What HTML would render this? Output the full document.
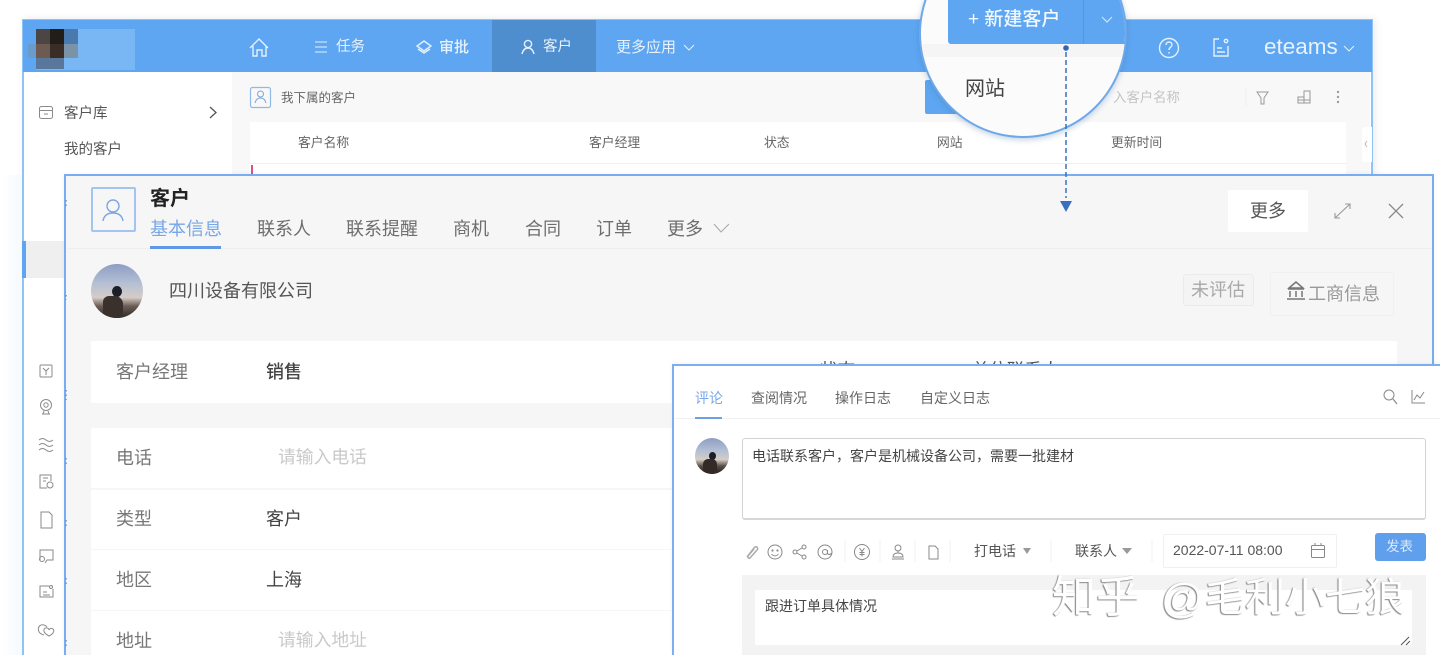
<!DOCTYPE html>
<html lang="zh">
<head>
<meta charset="utf-8">
<title>客户</title>
<style>
html,body{margin:0;padding:0;background:#fff}
body{width:1440px;height:655px;overflow:hidden;position:relative;font-family:"Liberation Sans","Noto Sans CJK SC",sans-serif;color:#555}
#r{position:absolute;left:0;top:0;width:1440px;height:655px;overflow:hidden;filter:blur(.35px);background:#fff}
.b{position:absolute;box-sizing:border-box}
.t{position:absolute;white-space:nowrap;line-height:1;font-family:"Liberation Sans","Noto Sans CJK SC",sans-serif}
svg.l{position:absolute;left:0;top:0;width:1440px;height:655px;overflow:visible;pointer-events:none}
.w{color:#e8f2fd;font-size:14.500px}
.h{color:#666;font-size:12.800px}
.tab{color:#6e6e6e;font-size:18px;top:220px}
.lab{color:#777;font-size:18px;left:116px}
.val{color:#444;font-size:18px;left:266px}
.ph{color:#c9c9c9;font-size:17.800px;left:278px}
.ct{color:#666;font-size:14px;top:391px}
.wm{color:#fff;text-shadow:-1px 1px 1px #8c8c8c,-1px 0 1px #b0b0b0}
</style>
</head>
<body>
<div id="r">
<!-- outer window -->
<div class="b" style="left:22px;top:19px;width:1351px;height:640px;background:#fff;border:2px solid #8fc2f5;border-top-width:1px;box-shadow:2px 0 8px rgba(0,0,0,.08)"></div>
<div class="b" style="left:0;top:175px;width:22px;height:480px;background:linear-gradient(90deg,#fff,#f6fafe)"></div>
<div class="b" style="left:23px;top:20px;width:1349px;height:52px;background:#5ea6f1"></div>
<div class="b" style="left:492px;top:20px;width:104px;height:52px;background:#4e8ecf"></div>
<!-- logo -->
<div class="b" style="left:36px;top:29px;width:99px;height:41px;background:#79b6f4"></div>
<div class="b" style="left:36px;top:29px;width:22px;height:15px;background:#4b4644"></div>
<div class="b" style="left:50px;top:29px;width:14px;height:15px;background:#231d1a"></div>
<div class="b" style="left:64px;top:29px;width:14px;height:15px;background:#4a79ae"></div>
<div class="b" style="left:28px;top:44px;width:8px;height:14px;background:#6a9ccb"></div>
<div class="b" style="left:36px;top:44px;width:14px;height:14px;background:#6d5a50"></div>
<div class="b" style="left:50px;top:44px;width:14px;height:14px;background:#3a2c26"></div>
<div class="b" style="left:64px;top:44px;width:14px;height:14px;background:#7b93a7"></div>
<div class="b" style="left:36px;top:58px;width:28px;height:11px;background:#58779a"></div>

<div class="t w" style="left:336px;top:40px">任务</div>
<div class="t w" style="left:439px;top:40px;font-size:15px;font-weight:500">审批</div>
<div class="t w" style="left:543px;top:40px">客户</div>
<div class="t w" style="left:616px;top:40px;font-size:15px">更多应用</div>
<div class="t" style="left:1264px;top:36px;font-size:22.500px;color:#e8f2fd">eteams</div>
<svg class="l" fill="none" stroke="#e4f0fd" stroke-width="1.400">
<path d="M250 48l9-9 9 9M253 46v10h4v-6h5v6h4V46"/>
<path d="M315 42h12M315 47h12M315 52h12" stroke-width="1"/>
<path d="M424 41l7 5-7 5-7-5zM418 49l6 4 6-4"/>
<circle cx="528" cy="44" r="3.600"/><path d="M522 54c1-4 3-6 6-6s5 2 6 6"/>
<path d="M684 45l5 5 5-5" stroke-width="1"/>
<circle cx="1169" cy="48" r="9.500"/><path d="M1166 45c0-4 6-4 6 0 0 2-3 2-3 5M1169 52v1.500"/>
<path d="M1219 39h-5v17h14v-10M1217 48h5M1217 52h8"/><circle cx="1226" cy="41" r="1.700"/>
<path d="M1344 46l5 5 5-5" stroke-width="1"/>
</svg>

<!-- sidebar -->
<div class="b" style="left:232px;top:72px;width:1138px;height:110px;background:#f8f8f8"></div>
<div class="t" style="left:64px;top:107px;font-size:14.500px;color:#555">客户库</div>
<div class="t" style="left:64px;top:143px;font-size:14.500px;color:#555">我的客户</div>
<div class="b" style="left:26px;top:241px;width:40px;height:37px;background:#efefef"></div>
<div class="b" style="left:22px;top:241px;width:4px;height:37px;background:#5ea6f1"></div>
<svg class="l" fill="none" stroke="#8a8a8a" stroke-width="1">
<rect x="39.500" y="106.500" width="13" height="12" rx="2"/><path d="M39.500 110.500h13M44 114h4"/>
<path d="M210 107l6 5.500-6 5.500" stroke="#555" stroke-width="1.300"/>
<rect x="40" y="365" width="12" height="12" rx="1"/><path d="M43 368l3 3 3-3M46 371v4"/>
<circle cx="46" cy="405" r="5.500"/><circle cx="46" cy="405" r="2.200"/><path d="M42 414h8M44 411l-1 3M48 411l1 3"/>
<path d="M39 440q3.500-3 7 0t7 0M39 445q3.500-3 7 0t7 0M39 450q3.500-3 7 0t7 0"/>
<path d="M51 481v-6h-11v13h7M43 478h5M43 481h3"/><circle cx="50" cy="485" r="3"/>
<path d="M41 512h8l3 3v13h-11z"/>
<path d="M40 561v-11h13v10h-6l-2 3"/><circle cx="42" cy="559" r="2.500"/>
<path d="M49 586h-9v11h13v-8M43 592h4M43 595h7"/><circle cx="51" cy="587" r="1.500"/>
<path d="M44 635c-9-2-6-12 0-10 2 .5 3 2 3 2"/><path d="M49 636c-8-4-5-9-2-8 1 0 2 1 2 2 1-2 3-2 4-1 2 2 0 5-4 7z"/>
</svg>

<!-- list -->
<div class="t h" style="left:281px;top:92px;font-size:12.500px">我下属的客户</div>
<div class="b" style="left:925px;top:80px;width:80px;height:34px;background:#5ea6f1;border-radius:2px"></div>
<div class="t" style="left:1113px;top:91px;font-size:13.400px;color:#c4c4c4">入客户名称</div>
<div class="b" style="left:250px;top:122px;width:1096px;height:60px;background:#fff"></div>
<div class="b" style="left:250px;top:163px;width:1096px;height:1px;background:#f0f0f0"></div>
<div class="t h" style="left:298px;top:137px">客户名称</div>
<div class="t h" style="left:589px;top:137px">客户经理</div>
<div class="t h" style="left:764px;top:137px">状态</div>
<div class="t h" style="left:937px;top:137px">网站</div>
<div class="t h" style="left:1111px;top:137px">更新时间</div>
<div class="b" style="left:251px;top:165px;width:2px;height:12px;background:#d9547c"></div>
<div class="b" style="left:1362px;top:127px;width:10px;height:35px;background:#fff;border-radius:3px 0 0 3px"></div>
<svg class="l" fill="none" stroke="#999" stroke-width="1">
<rect x="250.500" y="87.500" width="20" height="20" rx="2" stroke="#8fb9e8" stroke-width="1.200"/>
<circle cx="260.500" cy="94" r="3" stroke="#7aa5d8"/><path d="M255 103c1-4 3-5 5.500-5s4.500 1 5.500 5" stroke="#7aa5d8"/>
<path d="M1246 88v18" stroke="#eee"/>
<path d="M1257 92h11l-4 6v6h-3v-6z"/>
<path d="M1298 97h6v-6h6v12h-12zM1304 97v6M1304 91v6M1298 100h12"/>
<circle cx="1338" cy="92" r=".7"/><circle cx="1338" cy="97" r=".7"/><circle cx="1338" cy="102" r=".7"/>
<path d="M1367 141l-2 3 2 3" stroke="#bbb"/>
</svg>

<!-- magnifier -->
<div class="b" style="left:919px;top:-71px;width:208px;height:209px;border-radius:50%;background:#fbfbfb;border:2px solid #6ea8e8;overflow:hidden;box-shadow:0 2px 6px rgba(60,110,170,.3)">
  <div class="b" style="left:27px;top:0;width:180px;height:113px;background:#5ea6f1;border-radius:0 0 0 3px"></div>
  <div class="b" style="left:162px;top:0;width:1px;height:113px;background:#5595da"></div>
  <div class="b" style="left:0;top:113px;width:208px;height:13px;background:#f5f5f5"></div>
  <div class="t" style="left:47px;top:79px;font-size:19px;font-weight:500;color:#f2f8fe">+ 新建客户</div>
  <div class="t" style="left:44px;top:148px;font-size:20px;color:#444">网站</div>
  <svg style="position:absolute;left:178px;top:82px" width="16" height="14" fill="none" stroke="#cfe3fa" stroke-width="1.200"><path d="M3 4l5 5 5-5"/></svg>
</div>

<!-- modal -->
<div class="b" style="left:64px;top:174px;width:1370px;height:490px;background:#f6f6f6;border:2px solid #78aef0;box-shadow:0 0 4px rgba(0,0,0,.06)"></div>
<div class="b" style="left:67px;top:248px;width:1365px;height:1px;background:#eeeeee"></div>
<div class="b" style="left:91px;top:187px;width:45px;height:45px;border:2px solid #a3c4f0;border-radius:2px"></div>
<div class="t" style="left:150px;top:189px;font-size:20px;font-weight:700;color:#222">客户</div>
<div class="t tab" style="left:150px;color:#78a6e6">基本信息</div>
<div class="b" style="left:150px;top:246px;width:71px;height:3px;background:#5f98e4"></div>
<div class="t tab" style="left:257px">联系人</div>
<div class="t tab" style="left:346px">联系提醒</div>
<div class="t tab" style="left:453px">商机</div>
<div class="t tab" style="left:525px">合同</div>
<div class="t tab" style="left:596px">订单</div>
<div class="t tab" style="left:667px">更多</div>
<div class="b" style="left:1228px;top:190px;width:80px;height:42px;background:#fff;border-radius:2px"></div>
<div class="t" style="left:1250px;top:202px;font-size:18px;color:#555">更多</div>
<!-- avatar -->
<div class="b" style="left:91px;top:264px;width:52px;height:54px;border-radius:50%;overflow:hidden;background:linear-gradient(180deg,#8e9dc4 0%,#b3bfd4 35%,#d5cdc6 62%,#6b5d56 78%,#2e2724 100%)">
  <div class="b" style="left:21px;top:22px;width:10px;height:11px;border-radius:50%;background:#1c1f28"></div>
  <div class="b" style="left:12px;top:32px;width:20px;height:22px;border-radius:6px 8px 0 0;background:#3a302c"></div>
</div>
<div class="t" style="left:169px;top:282px;font-size:18px;color:#555">四川设备有限公司</div>
<div class="b" style="left:1183px;top:274px;width:71px;height:32px;background:#f4f4f4;border:1px solid #ebebeb;border-radius:3px"></div>
<div class="t" style="left:1191px;top:281px;font-size:18px;color:#a8a8a8">未评估</div>
<div class="b" style="left:1270px;top:272px;width:124px;height:44px;border:1px solid #f0f0f0;border-radius:3px"></div>
<div class="t" style="left:1308px;top:285px;font-size:18px;color:#999">工商信息</div>
<!-- cards -->
<div class="b" style="left:91px;top:341px;width:1306px;height:62px;background:#fff;border-radius:2px"></div>
<div class="t lab" style="top:363px">客户经理</div>
<div class="t val" style="top:363px;font-weight:500">销售</div>
<div class="t" style="left:820px;top:362px;font-size:17.500px;color:#555">状态</div>
<div class="t" style="left:972px;top:362px;font-size:17.500px;color:#555">单位联系人</div>
<div class="b" style="left:91px;top:428px;width:1306px;height:60px;background:#fff;border-radius:2px"></div>
<div class="b" style="left:91px;top:490px;width:1306px;height:170px;background:#fff"></div>
<div class="b" style="left:91px;top:549px;width:1306px;height:1px;background:#f6f6f6"></div>
<div class="b" style="left:91px;top:610px;width:1306px;height:1px;background:#f6f6f6"></div>
<div class="t lab" style="top:449px">电话</div>
<div class="t ph" style="top:449px">请输入电话</div>
<div class="t lab" style="top:510px">类型</div>
<div class="t val" style="top:510px">客户</div>
<div class="t lab" style="top:571px">地区</div>
<div class="t val" style="top:571px">上海</div>
<div class="t lab" style="top:632px">地址</div>
<div class="t ph" style="top:632px">请输入地址</div>
<svg class="l" fill="none" stroke="#888" stroke-width="1.300">
<circle cx="113" cy="206" r="6" stroke="#7da6e0" stroke-width="1.400"/><path d="M103 221c1-6 5-8 10-8s9 2 10 8" stroke="#7da6e0" stroke-width="1.400"/>
<path d="M714 224l7 8 8-8" stroke="#aaa" stroke-width="1.100"/>
<path d="M1335 218l15-14M1335 213v5h5M1345 204h5v5" stroke="#999" stroke-width="1.100"/>
<path d="M1389 204l14 14M1403 204l-14 14" stroke="#888" stroke-width="1.300"/>
<path d="M1296 282l-7 6h14zM1288 289h16M1290 291v6M1296 291v6M1302 291v6M1287 299h18" stroke="#777" stroke-width="1.500"/>
<g stroke="#6a8fc0" stroke-width="1.500" stroke-dasharray="1.500 3">
<path d="M66 200v6M66 295v5M66 390v10M66 458v6M66 520v8M66 578v6M66 640v6"/>
</g>
</svg>

<!-- comment panel -->
<div class="b" style="left:672px;top:364px;width:780px;height:300px;background:#fff;border:2px solid #7eaeee;box-shadow:0 -1px 4px rgba(0,0,0,.05)"></div>
<div class="b" style="left:675px;top:418px;width:765px;height:1px;background:#f0f0f0"></div>
<div class="t ct" style="left:695px;color:#7aa7e6">评论</div>
<div class="b" style="left:695px;top:417px;width:27px;height:2px;background:#6b9fe6"></div>
<div class="t ct" style="left:751px">查阅情况</div>
<div class="t ct" style="left:835px">操作日志</div>
<div class="t ct" style="left:920px">自定义日志</div>
<div class="b" style="left:695px;top:438px;width:34px;height:36px;border-radius:50%;overflow:hidden;background:linear-gradient(180deg,#8e9dc4 0%,#b3bfd4 35%,#d5cdc6 60%,#5a4d47 78%,#221d1b 100%)">
  <div class="b" style="left:14px;top:14px;width:7px;height:8px;border-radius:50%;background:#1c1f28"></div>
  <div class="b" style="left:8px;top:21px;width:14px;height:15px;border-radius:5px 5px 0 0;background:#332a27"></div>
</div>
<div class="b" style="left:742px;top:438px;width:684px;height:82px;border:1px solid #d2d2d2;border-bottom:2px solid #d6d6d6;border-radius:3px"></div>
<div class="t" style="left:752px;top:449px;font-size:14px;color:#444">电话联系客户，客户是机械设备公司，需要一批建材</div>
<div class="t" style="left:974px;top:544px;font-size:14px;color:#555">打电话</div>
<div class="t" style="left:1075px;top:544px;font-size:14px;color:#555">联系人</div>
<div class="b" style="left:1163px;top:534px;width:174px;height:34px;border:1px solid #f0f0f0;border-radius:2px"></div>
<div class="t" style="left:1173px;top:543px;font-size:14px;color:#555">2022-07-11 08:00</div>
<div class="b" style="left:1375px;top:533px;width:51px;height:28px;background:#5f9fec;border-radius:3px"></div>
<div class="t" style="left:1386px;top:540px;font-size:13.500px;color:#dbe9fb">发表</div>
<div class="b" style="left:742px;top:575px;width:684px;height:85px;background:#f3f3f3"></div>
<div class="b" style="left:755px;top:590px;width:657px;height:55px;background:#fff;border-radius:2px"></div>
<div class="t" style="left:765px;top:599px;font-size:14px;color:#444">跟进订单具体情况</div>
<svg class="l" fill="none" stroke="#888" stroke-width="1">
<circle cx="1389" cy="395" r="5"/><path d="M1393 399l4 5" stroke-width="1.200"/>
<path d="M1412 390v13h13M1414 400l3-5 3 3 4-6"/>
<path d="M747 557l7-9c2-3 5 0 3 2l-7 8c-1 1-3-1-2-2l6-7" stroke="#aaa" stroke-width="1.500"/>
<circle cx="775" cy="552" r="7"/><circle cx="772.500" cy="550.500" r=".6"/><circle cx="777.500" cy="550.500" r=".6"/><path d="M771.500 554c2 2.500 5 2.500 7 0"/>
<circle cx="795" cy="552" r="2"/><circle cx="804" cy="547" r="2"/><circle cx="804" cy="557" r="2"/><path d="M797 551l5-3M797 553l5 3"/>
<circle cx="825" cy="552" r="7"/><circle cx="825" cy="552" r="2.500"/><path d="M827.500 550v3c0 2 3 2 4 0"/>
<path d="M845 540v22M880 540v22M915 540v22M950 540v22M1051 540v22M1152 540v22" stroke="#f0f0f0"/>
<circle cx="862" cy="552" r="7.500"/><path d="M859.500 548l2.500 3.500 2.500-3.500M862 551.500v5M859.500 552.500h5M859.500 554.500h5"/>
<circle cx="898" cy="548" r="3"/><path d="M898 551v2M893 557c0-3 2-4 5-4s5 1 5 4zM892 559h12"/>
<path d="M929 546h6l3 3v10h-9z"/>
<path d="M1023 548h8l-4 6z" fill="#999" stroke="none"/>
<path d="M1122 548h10l-5 6z" fill="#999" stroke="none"/>
<rect x="1311.500" y="545.500" width="13" height="12" rx="1"/><path d="M1311.500 549.500h13M1315 543v3M1321 543v3"/>
<path d="M1401 645l8-8M1406 645l4-4" stroke="#555"/>
</svg>

<!-- connector -->
<svg class="l" fill="none">
<circle cx="1066" cy="48" r="2.800" fill="#2f66b5"/>
<path d="M1066 52v146" stroke="#3a70c4" stroke-width="1.500" stroke-dasharray="5 3"/>
<path d="M1060 201h12l-6 11z" fill="#3a6fc0"/>
</svg>

<!-- watermark -->
<div class="t wm" style="left:1052px;top:576px;font-size:44px">知乎</div>
<div class="t wm" style="left:1161px;top:578px;font-size:42px">@</div>
<div class="t wm" style="left:1205px;top:578px;font-size:40px">毛利小七狼</div>
</div>
</body>
</html>
